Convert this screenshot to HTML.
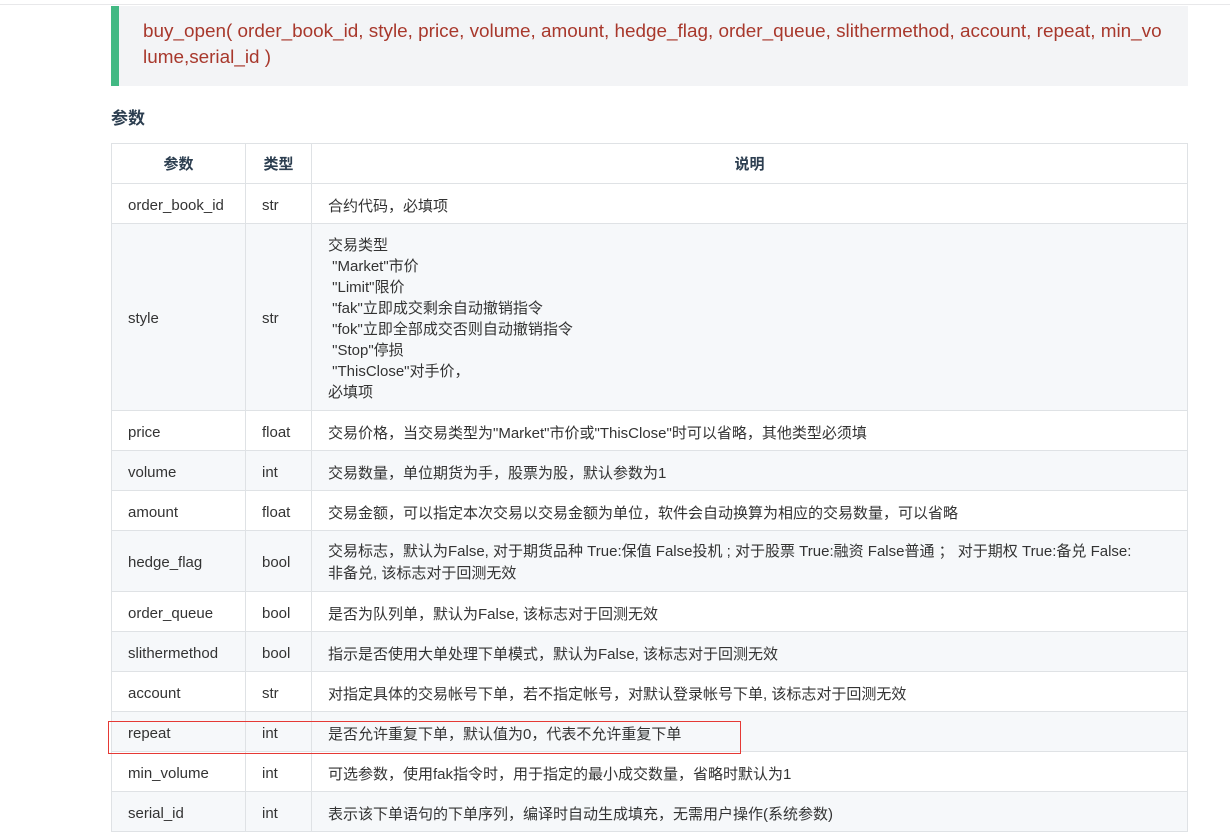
<!DOCTYPE html>
<html><head><meta charset="utf-8">
<style>
html,body{margin:0;padding:0;background:#fff;}
body{width:1230px;height:837px;overflow:hidden;position:relative;font-family:"Liberation Sans","Noto Sans CJK SC",sans-serif;color:#333;}
.topline{position:absolute;left:0;top:4px;width:1230px;height:1px;background:#e8e8ea;}
.bq{position:absolute;left:111px;top:6px;width:1077px;height:80px;background:#f3f4f6;}
.bq .bar{position:absolute;left:0;top:0;width:8px;height:80px;background:#42b983;}
.bq .t{position:absolute;left:32px;top:13px;font-size:18.9px;line-height:26px;color:#a8382c;white-space:nowrap;}
h3{position:absolute;left:111px;top:104px;margin:0;font-size:17px;font-weight:bold;color:#2c3e50;}
table{position:absolute;left:111px;top:143px;border-collapse:collapse;width:1077px;font-size:15px;}
td,th{border:1px solid #dfe2e5;padding:3px 16px 0 16px;vertical-align:middle;box-sizing:border-box;}
th{height:40px;font-weight:bold;color:#2c3e50;text-align:center;padding:0;}
td{height:40px;color:#333;}
tr.g td{background:#f6f8fa;}
.style td{height:187px;}
.hf td{height:61px;line-height:22px;}
.box{position:absolute;left:108px;top:721px;width:631px;height:31px;border:1px solid #e53935;}
</style></head><body>
<div class="topline"></div>
<div class="bq"><div class="bar"></div><div class="t">buy_open( order_book_id, style, price, volume, amount, hedge_flag, order_queue, slithermethod, account, repeat, min_vo<br>lume,serial_id )</div></div>
<h3>参数</h3>
<table>
<colgroup><col style="width:134px"><col style="width:66px"><col></colgroup>
<tr><th>参数</th><th>类型</th><th>说明</th></tr>
<tr><td>order_book_id</td><td>str</td><td>合约代码，必填项</td></tr>
<tr class="g style"><td>style</td><td>str</td><td style="line-height:21px">交易类型<br>&nbsp;"Market"市价<br>&nbsp;"Limit"限价<br>&nbsp;"fak"立即成交剩余自动撤销指令<br>&nbsp;"fok"立即全部成交否则自动撤销指令<br>&nbsp;"Stop"停损<br>&nbsp;"ThisClose"对手价，<br>必填项</td></tr>
<tr><td>price</td><td>float</td><td>交易价格，当交易类型为"Market"市价或"ThisClose"时可以省略，其他类型必须填</td></tr>
<tr class="g"><td>volume</td><td>int</td><td>交易数量，单位期货为手，股票为股，默认参数为1</td></tr>
<tr><td>amount</td><td>float</td><td>交易金额，可以指定本次交易以交易金额为单位，软件会自动换算为相应的交易数量，可以省略</td></tr>
<tr class="g hf"><td>hedge_flag</td><td>bool</td><td>交易标志，默认为False, 对于期货品种 True:保值 False投机 ; 对于股票 True:融资 False普通 ； 对于期权 True:备兑 False:<br>非备兑, 该标志对于回测无效</td></tr>
<tr><td>order_queue</td><td>bool</td><td>是否为队列单，默认为False, 该标志对于回测无效</td></tr>
<tr class="g"><td>slithermethod</td><td>bool</td><td>指示是否使用大单处理下单模式，默认为False, 该标志对于回测无效</td></tr>
<tr><td>account</td><td>str</td><td>对指定具体的交易帐号下单，若不指定帐号，对默认登录帐号下单, 该标志对于回测无效</td></tr>
<tr class="g"><td>repeat</td><td>int</td><td>是否允许重复下单，默认值为0，代表不允许重复下单</td></tr>
<tr><td>min_volume</td><td>int</td><td>可选参数，使用fak指令时，用于指定的最小成交数量，省略时默认为1</td></tr>
<tr class="g"><td>serial_id</td><td>int</td><td>表示该下单语句的下单序列，编译时自动生成填充，无需用户操作(系统参数)</td></tr>
</table>
<div class="box"></div>
</body></html>
